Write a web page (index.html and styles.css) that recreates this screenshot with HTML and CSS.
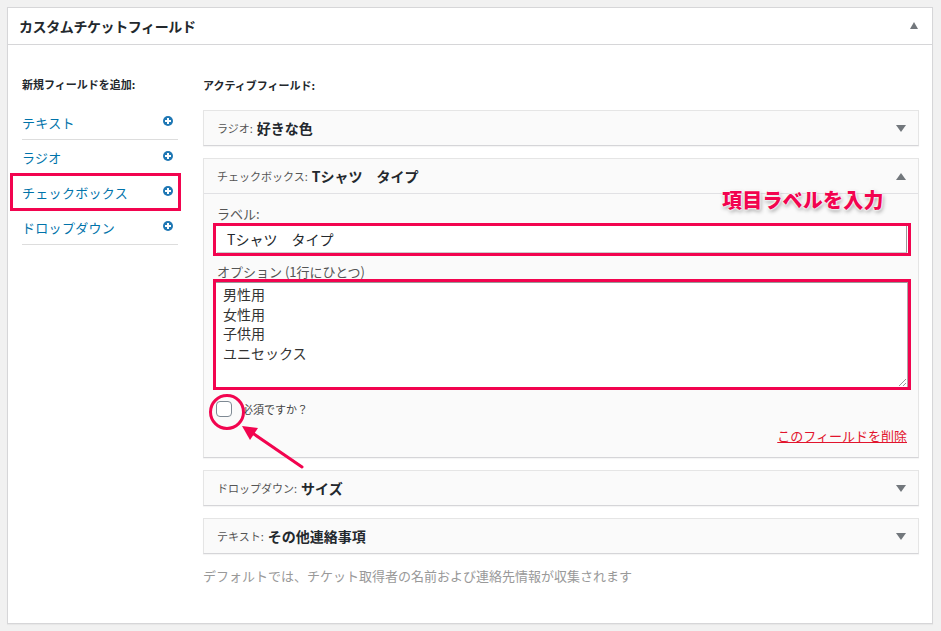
FILE: index.html
```html
<!DOCTYPE html>
<html lang="ja">
<head>
<meta charset="utf-8">
<title>カスタムチケットフィールド</title>
<link rel="stylesheet" href="styles.css">
</head>
<body>
<div class="panel">
  <div class="panel-head">
    <h2 class="panel-title">カスタムチケットフィールド</h2>
    <span class="tri tri-up small"></span>
  </div>
  <div class="panel-body">
    <div class="col-left">
      <h4 class="col-heading">新規フィールドを追加:</h4>
      <ul class="add-list">
        <li class="add-item"><span>テキスト</span><span class="plus"></span></li>
        <li class="add-item"><span>ラジオ</span><span class="plus"></span></li>
        <li class="add-item hl"><span>チェックボックス</span><span class="plus"></span></li>
        <li class="add-item"><span>ドロップダウン</span><span class="plus"></span></li>
      </ul>
    </div>
    <div class="col-right">
      <h4 class="col-heading">アクティブフィールド:</h4>
      <div class="field">
        <div class="field-head"><span class="type">ラジオ:</span><span class="name">好きな色</span><span class="tri tri-down"></span></div>
      </div>
      <div class="field">
        <div class="field-head open"><span class="type">チェックボックス:</span><span class="name">Tシャツ　タイプ</span><span class="tri tri-up"></span></div>
        <div class="field-body">
          <div class="lbl">ラベル:</div>
          <div class="mark-box"><div class="input">Tシャツ　タイプ</div></div>
          <div class="lbl lbl2">オプション (1行にひとつ)</div>
          <div class="mark-box mark-area"><div class="textarea">男性用<br>女性用<br>子供用<br>ユニセックス<span class="grip"></span></div></div>
          <div class="req-row"><span class="checkbox"></span><span class="req-text">必須ですか？</span></div>
          <div class="del-row"><a class="del" href="#">このフィールドを削除</a></div>
        </div>
      </div>
      <div class="field">
        <div class="field-head"><span class="type">ドロップダウン:</span><span class="name">サイズ</span><span class="tri tri-down"></span></div>
      </div>
      <div class="field">
        <div class="field-head"><span class="type">テキスト:</span><span class="name">その他連絡事項</span><span class="tri tri-down"></span></div>
      </div>
      <p class="note">デフォルトでは、チケット取得者の名前および連絡先情報が収集されます</p>
    </div>
  </div>
</div>
<div class="callout">項目ラベルを入力</div>
<svg class="arrow" width="941" height="631" viewBox="0 0 941 631">
  <line x1="302" y1="467" x2="251" y2="432" stroke="#f2044f" stroke-width="3" stroke-linecap="round"/>
  <polygon points="242,426 258,428 250,440" fill="#f2044f"/>
</svg>
</body>
</html>
```
FILE: styles.css
```css
* { box-sizing: border-box; }
html, body { margin: 0; padding: 0; }
body {
  background: #f1f1f1;
  padding: 7px 8px 7px 7px;
  font-family: "Noto Sans CJK JP", "Noto Sans", sans-serif;
  color: #444;
  position: relative;
  width: 941px;
  height: 631px;
  overflow: hidden;
}
.panel {
  background: #fff;
  border: 1px solid #d6d6d8;
  height: 617px;
  box-shadow: 0 1px 1px rgba(0,0,0,.04);
}
.panel-head {
  height: 37px;
  border-bottom: 1px solid #d6d6d8;
  display: flex;
  align-items: center;
  justify-content: space-between;
  padding: 0 14px 1px 11px;
}
.panel-title {
  margin: 0;
  font-size: 14px;
  font-weight: 700;
  color: #23282d;
  letter-spacing: -0.4px;
  line-height: 20px;
}
.tri { width: 0; height: 0; display: inline-block; }
.tri-up { border-left: 5px solid transparent; border-right: 5px solid transparent; border-bottom: 7px solid #72777c; }
.tri-down { border-left: 5px solid transparent; border-right: 5px solid transparent; border-top: 7px solid #72777c; }
.tri.small { border-left-width: 4px; border-right-width: 4px; border-bottom-width: 7px; }
.panel-body {
  display: flex;
  padding: 31px 13px 0 14px;
  gap: 25px;
}
.col-left { width: 156px; flex: none; }
.col-right { flex: 1; }
.col-heading {
  margin: 0;
  font-size: 11px;
  font-weight: 700;
  color: #23282d;
  line-height: 16px;
}
.col-right .col-heading { margin-top: 1px; }
.add-list { list-style: none; margin: 13px 0 0; padding: 0; }
.add-item {
  display: flex;
  justify-content: space-between;
  align-items: center;
  padding: 10px 5px 8px 0;
  line-height: 16px;
  font-size: 13px;
  color: #0073aa;
  border-bottom: 1px solid #dddddd;
  letter-spacing: 0.3px;
}
.add-item.hl { position: relative; }
.add-item.hl::after {
  content: "";
  position: absolute;
  left: -12px; right: -3px; top: -2px; bottom: -2px;
  border: 3px solid #f2044f;
}
.plus {
  width: 10px; height: 10px;
  border-radius: 50%;
  background: #1e77b4;
  position: relative;
  margin-top: -4px;
}
.plus::before, .plus::after {
  content: "";
  position: absolute;
  background: #fff;
}
.plus::before { left: 2px; right: 2px; top: 4px; height: 2px; }
.plus::after { top: 2px; bottom: 2px; left: 4px; width: 2px; }
.field {
  margin-top: 12px;
  border: 1px solid #e5e5e5;
  border-bottom-color: #d5d5d8;
  background: #fafafa;
  box-shadow: 0 1px 1px rgba(0,0,0,.04);
}
.col-heading + .field { margin-top: 17px; }
.field-head {
  height: 34px;
  display: flex;
  align-items: center;
  padding: 0 12px 0 13px;
}
.field-head.open { height: 35px; border-bottom: 1px solid #e1e1e4; }
.field-head .tri { margin-left: auto; }
.type { font-size: 11px; color: #555; }
.name { font-size: 14px; font-weight: 700; color: #23282d; margin-left: 4px; }
.field-body { padding: 11px 7px 12px 9px; }
.lbl { font-size: 13px; color: #555; line-height: 18px; padding-left: 4px; }
.lbl2 { margin-top: 7px; }
.mark-box { border: 3px solid #f2044f; background: #fff; }
.input {
  height: 27px;
  margin: 0 1px 0 1px;
  border-right: 1px solid #999;
  border-bottom: 1px solid #ccc;
  font-size: 14px;
  color: #23282d;
  line-height: 27px;
  padding-left: 10px;
}
.mark-area { margin-top: -2px; height: 111px; }
.textarea {
  position: relative;
  height: 105px;
  border-top: 1px solid #999;
  border-right: 1px solid #aaa;
  font-size: 14px;
  color: #333;
  line-height: 19.6px;
  padding: 2px 0 0 7px;
}
.grip {
  position: absolute;
  right: 1px; bottom: 1px;
  width: 7px; height: 7px;
  background: linear-gradient(135deg, transparent 45%, #999 45%, #999 55%, transparent 55%, transparent 75%, #999 75%, #999 85%, transparent 85%);
}
.req-row { display: flex; align-items: center; margin-top: 11px; padding-left: 3px; }
.checkbox {
  width: 16px; height: 16px;
  border: 1px solid #7e8993;
  border-radius: 4px;
  background: #fff;
  position: relative;
  flex: none;
}
.checkbox::after {
  content: "";
  position: absolute;
  left: -8px; top: -8px;
  width: 30px; height: 30px;
  border: 3px solid #f2044f;
  border-radius: 50%;
}
.req-text { font-size: 11px; color: #444; margin-left: 10px; line-height: 16px; }
.del-row { display: flex; justify-content: flex-end; margin-top: 10px; margin-right: 4px; }
.del { font-size: 13px; color: #e2142d; line-height: 18px; text-decoration: underline; }
.note { margin: 13px 0 0; font-size: 13px; color: #999; line-height: 18px; }
.callout {
  position: absolute;
  left: 722px; top: 187px;
  font-size: 20px;
  font-weight: 900;
  color: #f2044f;
  line-height: 26px;
  letter-spacing: 0.2px;
  text-shadow: 0 0 2px #fff, 0 0 2px #fff, 0 0 3px #fff, 1px 2px 4px rgba(0,0,0,.45);
}
.arrow { position: absolute; left: 0; top: 0; pointer-events: none; }
```
